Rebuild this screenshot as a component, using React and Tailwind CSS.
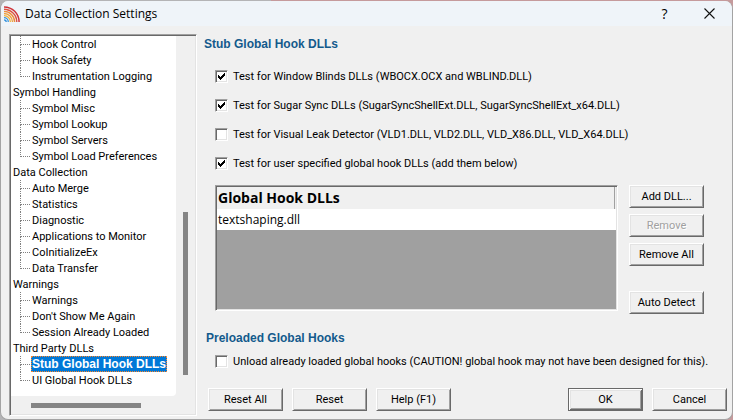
import React, { useState } from 'react';
import clsx from 'clsx';

const TREE = [
  { items: ['Hook Control', 'Hook Safety', 'Instrumentation Logging'] },
  { title: 'Symbol Handling', items: ['Symbol Misc', 'Symbol Lookup', 'Symbol Servers', 'Symbol Load Preferences'] },
  {
    title: 'Data Collection',
    items: ['Auto Merge', 'Statistics', 'Diagnostic', 'Applications to Monitor', 'CoInitializeEx', 'Data Transfer'],
  },
  { title: 'Warnings', items: ['Warnings', "Don't Show Me Again", 'Session Already Loaded'] },
  { title: 'Third Party DLLs', items: ['Stub Global Hook DLLs', 'UI Global Hook DLLs'] },
];

const TESTS = [
  { label: 'Test for Window Blinds DLLs (WBOCX.OCX and WBLIND.DLL)', checked: true },
  { label: 'Test for Sugar Sync DLLs (SugarSyncShellExt.DLL, SugarSyncShellExt_x64.DLL)', checked: true },
  { label: 'Test for Visual Leak Detector (VLD1.DLL, VLD2.DLL, VLD_X86.DLL, VLD_X64.DLL)', checked: false },
  { label: 'Test for user specified global hook DLLs (add them below)', checked: true },
];

const Logo = () => (
  <svg width="16" height="16" viewBox="0 0 16 16" fill="none">
    <path d="M0 .9A15.1 15.1 0 0 1 15.1 16" stroke="#cf3339" strokeWidth="1.5" />
    <path d="M0 3.2A12.8 12.8 0 0 1 12.8 16" stroke="#dc5140" strokeWidth="1.4" />
    <path d="M0 5.4A10.6 10.6 0 0 1 10.6 16" stroke="#ec8b3a" strokeWidth="1.4" />
    <path d="M0 7.5A8.5 8.5 0 0 1 8.5 16" stroke="#f0a03a" strokeWidth="1.3" />
    <path d="M0 9.6A6.4 6.4 0 0 1 6.4 16" stroke="#f2b23e" strokeWidth="1.3" />
    <path d="M0 11.7A4.3 4.3 0 0 1 4.3 16" stroke="#3b95dc" strokeWidth="1.3" />
    <path d="M0 13.8A2.2 2.2 0 0 1 2.2 16" stroke="#2f8fdc" strokeWidth="1.3" />
  </svg>
);

const CheckBox = ({ label, defaultChecked }) => (
  <label className="flex h-4 items-center gap-[5px]">
    <span className="relative h-[13px] w-[13px] shrink-0">
      <input
        type="checkbox"
        defaultChecked={defaultChecked}
        className="peer block h-[13px] w-[13px] appearance-none border border-t-[#a0a0a0] border-l-[#a0a0a0] border-r-white border-b-white bg-white shadow-[inset_1px_1px_0_#696969,inset_-1px_-1px_0_#e3e3e3]"
      />
      <svg className="pointer-events-none absolute top-[3px] left-[3px] hidden peer-checked:block" width="7" height="7" viewBox="0 0 7 7" shapeRendering="crispEdges">
        <path d="M0 2h1v1h1v1h1v-1h1v-1h1v-1h1v-1h1v3h-1v1h-1v1h-1v1h-1v1h-1v-1h-1v-1h-1z" fill="#000" />
      </svg>
    </span>
    <span className="pt-px">{label}</span>
  </label>
);

const Button = ({ children, primary, className, ...props }) => (
  <button
    className={clsx(
      'h-[23px] w-[75px] shrink-0 border bg-[#f0f0f0] text-center',
      primary
        ? 'border-[#696969] shadow-[inset_1px_1px_0_#ffffff,inset_-1px_-1px_0_#696969,inset_2px_2px_0_#e3e3e3,inset_-2px_-2px_0_#a0a0a0]'
        : 'border-t-white border-l-white border-r-[#696969] border-b-[#696969] shadow-[inset_1px_1px_0_#e3e3e3,inset_-1px_-1px_0_#a0a0a0]',
      'disabled:text-[#a0a0a0] disabled:[text-shadow:1px_1px_0_#fff]',
      className
    )}
    {...props}
  >
    {children}
  </button>
);

const TreeItem = ({ label, last, selected, onSelect }) => (
  <li className="flex h-4 items-stretch pl-[9px]">
    <div className="w-[11px] shrink-0">
      <div className="h-[9px] w-[10px] border-b border-l border-dotted border-[#808080]"></div>
      {!last && <div className="h-[7px] border-l border-dotted border-[#808080]"></div>}
    </div>
    <button
      onClick={onSelect}
      className={clsx(
        'px-px whitespace-nowrap',
        selected
          ? "bg-[#0078d7] font-['Liberation_Sans',Arial,sans-serif] text-xs leading-4 font-bold text-white outline-1 -outline-offset-1 outline-dotted outline-[#ff8728]"
          : 'leading-[18px]'
      )}
    >
      {label}
    </button>
  </li>
);

const Tree = () => {
  const [selected, setSelected] = useState('Stub Global Hook DLLs');

  return (
    <nav className="flex w-[188px] shrink-0 flex-col border border-t-[#a0a0a0] border-l-[#a0a0a0] border-r-white border-b-white bg-[#f0f0f0] p-px shadow-[inset_1px_1px_0_#696969,inset_-1px_-1px_0_#e3e3e3]">
      <div className="flex flex-1">
        <div className="flex-1 rounded-br-sm bg-white pb-[7px]">
          {TREE.map((group, i) => (
            <div key={i}>
              {group.title && <div className="h-4 pl-0.5 leading-[18px]">{group.title}</div>}
              <ul>
                {group.items.map((item, j) => (
                  <TreeItem
                    key={item}
                    label={item}
                    last={j === group.items.length - 1}
                    selected={item === selected}
                    onSelect={() => setSelected(item)}
                  />
                ))}
              </ul>
            </div>
          ))}
        </div>
        {/* Vertical scrollbar */}
        <div className="flex w-[19px] flex-col items-center justify-end pb-[21px]">
          <div className="h-[163px] w-[5px] bg-[#858585]"></div>
        </div>
      </div>
      {/* Horizontal scrollbar */}
      <div className="flex h-[18px] items-center pl-5">
        <div className="h-[5px] w-[110px] bg-[#858585]"></div>
      </div>
    </nav>
  );
};

export default function App() {
  return (
    <div className="flex min-h-screen flex-col bg-[linear-gradient(90deg,#b4b4b6_0%,#b4b4b6_37%,#c59a9c_37%,#c59a9c_100%)] pt-px font-['Roboto','Liberation_Sans',sans-serif] text-[11px] leading-4 text-black">
      <div className="flex flex-1 flex-col overflow-hidden rounded-lg border-r border-b border-l border-[#a3a3a3] bg-[#f0f0f0]">
        {/* Title bar */}
        <header className="flex h-[25px] items-center bg-[#eff4f9] pl-[3px] font-['Open_Sans',sans-serif] text-xs">
          <Logo />
          <h1 className="flex-1 pl-[5px]">Data Collection Settings</h1>
          <button aria-label="Help" className="w-[45px] text-center text-sm">?</button>
          <button aria-label="Close" className="flex w-[45px] justify-center">
            <svg width="11" height="11" viewBox="0 0 11 11" fill="none" stroke="#111" strokeWidth="1.1">
              <path d="M.5.5l10 10M10.5.5l-10 10" />
            </svg>
          </button>
        </header>

        <div className="flex flex-1 gap-[7px] pt-2 pb-[3px] pl-2">
          <Tree />

          <main className="flex flex-1 flex-col pb-[5px]">
            <h2 className="pt-0.5 font-['Liberation_Sans',Arial,sans-serif] text-xs font-bold text-[#135a8c]">Stub Global Hook DLLs</h2>
            <div className="flex flex-col gap-[13px] pt-4 pl-[11px]">
              {TESTS.map((test) => (
                <CheckBox key={test.label} label={test.label} defaultChecked={test.checked} />
              ))}
            </div>

            <div className="flex gap-[11px] pt-[14px] pr-7 pl-[11px]">
              <div className="mb-[3px] flex-1 border border-t-[#a0a0a0] border-l-[#a0a0a0] border-r-white border-b-white bg-[#a0a0a0] p-px shadow-[inset_1px_1px_0_#696969,inset_-1px_-1px_0_#e3e3e3]">
                <table className="w-full border-collapse font-['Open_Sans',sans-serif]">
                  <thead>
                    <tr className="h-[22px] bg-[#f0f0f0]">
                      <th className="px-px py-0 text-left text-sm font-bold shadow-[inset_-1px_0_0_#f0f0f0,inset_-2px_0_0_#a0a0a0]">Global Hook DLLs</th>
                    </tr>
                  </thead>
                  <tbody>
                    <tr className="h-[21px] bg-white">
                      <td className="px-px py-0 text-xs">textshaping.dll</td>
                    </tr>
                  </tbody>
                </table>
              </div>
              <div className="flex flex-col gap-1.5">
                <Button>Add DLL...</Button>
                <Button disabled>Remove</Button>
                <Button>Remove All</Button>
                <Button className="mt-[19px]">Auto Detect</Button>
              </div>
            </div>

            <h2 className="pt-4 pl-0.5 font-['Liberation_Sans',Arial,sans-serif] text-xs font-bold text-[#135a8c]">Preloaded Global Hooks</h2>
            <div className="pt-[7px] pl-[11px]">
              <CheckBox label="Unload already loaded global hooks (CAUTION! global hook may not have been designed for this)." />
            </div>

            <footer className="mt-auto flex gap-[9px] pr-[5px] pl-1">
              <Button>Reset All</Button>
              <Button>Reset</Button>
              <Button>Help (F1)</Button>
              <div className="flex-1"></div>
              <Button primary>OK</Button>
              <Button>Cancel</Button>
            </footer>
          </main>
        </div>
      </div>
    </div>
  );
}
